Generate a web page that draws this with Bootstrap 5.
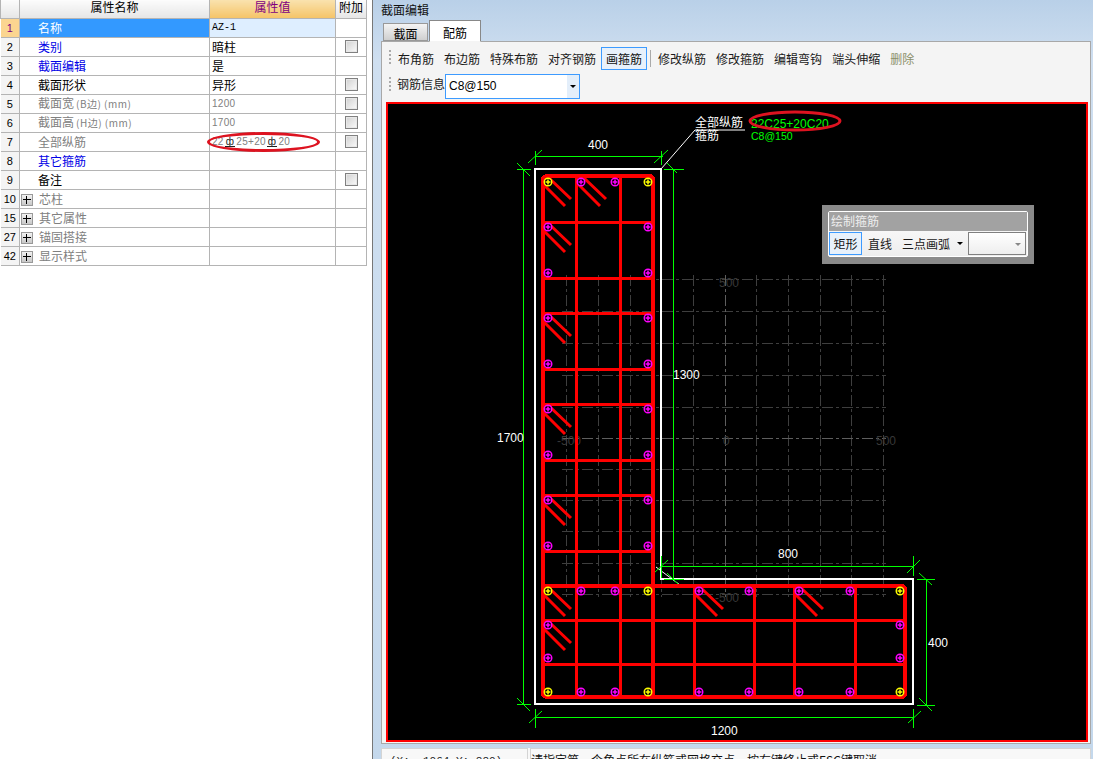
<!DOCTYPE html>
<html lang="zh-CN">
<head>
  <meta charset="UTF-8">
  <title>截面编辑</title>
  <link href="https://cdn.jsdelivr.net/npm/bootstrap@5.3.0/dist/css/bootstrap.min.css" rel="stylesheet">
  <style>
    html, body { height: 759px; overflow: hidden; }
    body { font: 12px/14px "Noto Sans CJK SC", sans-serif; color: #000; background: #fff; }
    .left-pane { width: 373px; flex: none; border-right: 1px solid #777; }
    .right-pane { width: 720px; flex: none; padding: 0 2px 0 8px; background: linear-gradient(#b9d0e8, #cfdff0 60px, #c4d8ec); }

    .prop-table { width: 366px; table-layout: fixed; border-collapse: collapse; margin: 0; border-color: #b4b4b4; }
    .prop-table > :not(caption) > * > * { height: 19px; padding: 0 0 0 2px; font-weight: 400; line-height: 14px; vertical-align: middle; border: 1px solid #b4b4b4; box-shadow: none; background: #fff; color: #000; }
    .prop-table > thead > tr > th { height: 18px; padding: 0; text-align: center; vertical-align: top; border-top: 0; background: linear-gradient(#fcfcfc, #e6e6e6); }
    .prop-table > thead > tr > th.val-head { background: linear-gradient(#f9e2ae, #f5c468); color: #800080; }
    .prop-table > tbody > tr > td.num { padding: 0; text-align: center; font: 11px/14px "Liberation Sans", sans-serif; background: #f4f4f4; border-left: 0; }
    .prop-table > tbody > tr > td.num-on { background: #fbd590; color: #800080; }
    .prop-table > tbody > tr > td.name { padding-left: 18px; }
    .prop-table > tbody > tr > td.tree { padding-left: 1px; }
    .prop-table > tbody > tr > td.sel { background: #3399ff; color: #fff; }
    .prop-table > tbody > tr > td.sel-val { background: #deeeff; font: 10px/14px "Liberation Mono", monospace; }
    .prop-table > tbody > tr > td.blue { color: #0000e6; }
    .prop-table > tbody > tr > td.dim { color: #808080; }
    .prop-table > tbody > tr > td.small-num { font: 10px/14px "Liberation Sans", sans-serif; letter-spacing: .3px; }
    .prop-table > tbody > tr > td.chk { padding: 0; text-align: center; }
    .unit { font-size: 10px; letter-spacing: .5px; margin-left: 2px; }
    .check-box { display: block; width: 13px; height: 13px; margin: 0 auto; border: 1px solid #808080; background: linear-gradient(135deg, #d0d0d0, #fbfbfb); box-shadow: inset 0 0 0 1px #e8e8e8; }
    .plus-box { display: inline-block; width: 12px; height: 12px; margin-right: 6px; vertical-align: -2px; border: 1px solid #999; background: linear-gradient(#f2f2f2, #c8c8c8); position: relative; }
    .plus-box::before { content: ""; position: absolute; left: 1px; right: 1px; top: 4px; height: 1px; background: #000; }
    .plus-box::after { content: ""; position: absolute; top: 1px; bottom: 1px; left: 4px; width: 1px; background: #000; }
    .bar-sym { color: #222; border-bottom: 1px solid #222; line-height: 8px; display: inline-block; font-size: 10px; margin: 0 1px; padding: 0 1px; }
    .mark-ring { position: absolute; left: 207px; top: 132px; width: 113px; height: 20px; border: 3px solid #dd1320; border-radius: 50%; pointer-events: none; }

    .win-title { height: 20px; padding-top: 3px; color: #111; }
    .sect-tabs { height: 21px; padding-left: 2px; border: 0; flex-wrap: nowrap; position: relative; z-index: 1; }
    .sect-tabs .nav-link { height: 18px; margin: 3px 1px 0 0; padding: 3px 0 0; width: 45px; text-align: center; font-size: 12px; line-height: 14px; color: #000; border: 1px solid #999; border-radius: 0; background: linear-gradient(#f4f4f4, #cfcfcf); }
    .sect-tabs .nav-link.active { height: 22px; width: 52px; margin-top: 0; padding-top: 5px; color: #000; border-color: #888; border-bottom-color: #f4f4f4; background: #fff; }
    .tab-frame { height: 703px; padding: 2px 2px 0 4px; border: 1px solid #a8a8a8; background: #f4f4f4; }
    .tool-row { height: 27px; padding: 3px 0 0 3px; background: #f4f4f4; flex-wrap: nowrap; }
    .tool-row-info { height: 31px; padding-top: 3px; }
    .grip { width: 2px; height: 15px; margin: 3px 2px 0 0; flex: none; background: repeating-linear-gradient(#aaa 0 2px, transparent 2px 4px); }
    .tool-btn { height: 23px; padding: 3px 4px; font-size: 12px; line-height: 15px; color: #1a1a1a; border: 1px solid transparent; border-radius: 0; white-space: nowrap; flex: none; }
    .tool-btn.active { border-color: #3d9bff; background: #e8f1fb; color: #111; }
    .tool-btn.off { color: #8b8f6a; }
    .tool-sep { width: 1px; height: 17px; margin: 3px 2px 0 3px; background: #aaa; flex: none; }
    .tool-label { padding-top: 3px; margin-left: 4px; width: 48px; flex: none; color: #222; }
    .bar-select { width: 135px; height: 25px; padding: 4px 0 0 3px; font: 12px/15px "Liberation Sans", sans-serif; background: #fff; border: 1px solid #3d9bff; position: relative; }
    .drop-btn { position: absolute; right: 0; top: 0; bottom: 0; width: 12px; background: #e3eefa; }
    .drop-btn::after, .cad-more::after, .cad-combo::after { content: ""; position: absolute; border: 3px solid transparent; border-top: 3px solid #000; border-bottom: 0; }
    .drop-btn::after { left: 3px; top: 10px; }

    .cad-view { width: 702px; height: 640px; border: 2px solid #f00; background: #000; position: relative; }
    .cad-view svg { display: block; }
    .cad-view text { font: 12px "Liberation Sans", sans-serif; fill: #fff; }
    .cad-view text.cn { font-family: "Noto Sans CJK SC", sans-serif; }
    .cad-view text.gr { fill: #0f0; }
    .cad-view text.gr-sm { fill: #0f0; font-size: 10.5px; }
    .cad-view text.ax { fill: #383838; }
    .cad-float { position: absolute; left: 434px; top: 101px; width: 212px; height: 59px; padding: 6px; background: #8a8a8a; }
    .float-inner { border: 1px solid #fff; border-radius: 2px; height: 46px; background: linear-gradient(#fff, #ededed); }
    .float-title { height: 19px; padding: 2px 2px; color: #eee; background: #a2a2a2; }
    .float-tools { padding: 1px 0 0 0; }
    .float-tools .tool-btn { height: 23px; padding: 3px 5px; }
    .float-tools .tool-btn.active { width: 33px; padding: 3px 0; text-align: center; }
    .float-tools .tool-btn.arc { padding-left: 3px; }
    .cad-more { width: 10px; flex: none; position: relative; margin-right: 2px; }
    .cad-more::after { left: 1px; top: 10px; }
    .cad-combo { width: 58px; height: 23px; flex: none; border: 1px solid #808080; background: linear-gradient(#fff, #eee); position: relative; }
    .cad-combo::after { right: 4px; top: 10px; border-top-color: #888; }

    .status-row { margin-top: 4px; height: 24px; gap: 2px; background: #f8f8f8; }
    .status-pos { width: 147px; padding: 5px 0 0 8px; border: 1px solid #d4d4d4; font: 11px/14px "Liberation Mono", monospace; color: #222; }
    .status-msg { flex: 1; padding-top: 4px; border: 1px solid #d4d4d4; color: #111; white-space: nowrap; }
  </style>
</head>
<body>
<div class="d-flex">
  <div class="left-pane position-relative">
    <table class="table prop-table">
      <colgroup><col style="width:19px"><col style="width:190px"><col style="width:126px"><col style="width:31px"></colgroup>
      <thead>
        <tr><th></th><th>属性名称</th><th class="val-head">属性值</th><th>附加</th></tr>
      </thead>
      <tbody>
        <tr><td class="num num-on">1</td><td class="name sel">名称</td><td class="sel-val">AZ-1</td><td></td></tr>
        <tr><td class="num">2</td><td class="name blue">类别</td><td>暗柱</td><td class="chk"><span class="check-box"></span></td></tr>
        <tr><td class="num">3</td><td class="name blue">截面编辑</td><td>是</td><td></td></tr>
        <tr><td class="num">4</td><td class="name">截面形状</td><td>异形</td><td class="chk"><span class="check-box"></span></td></tr>
        <tr><td class="num">5</td><td class="name dim">截面宽<span class="unit">(B边) (mm)</span></td><td class="dim small-num">1200</td><td class="chk"><span class="check-box"></span></td></tr>
        <tr><td class="num">6</td><td class="name dim">截面高<span class="unit">(H边) (mm)</span></td><td class="dim small-num">1700</td><td class="chk"><span class="check-box"></span></td></tr>
        <tr><td class="num">7</td><td class="name dim">全部纵筋</td><td class="dim small-num">22<span class="bar-sym">ф</span>25+20<span class="bar-sym">ф</span>20</td><td class="chk"><span class="check-box"></span></td></tr>
        <tr><td class="num">8</td><td class="name blue">其它箍筋</td><td></td><td></td></tr>
        <tr><td class="num">9</td><td class="name">备注</td><td></td><td class="chk"><span class="check-box"></span></td></tr>
        <tr><td class="num">10</td><td class="tree dim"><span class="plus-box"></span>芯柱</td><td></td><td></td></tr>
        <tr><td class="num">15</td><td class="tree dim"><span class="plus-box"></span>其它属性</td><td></td><td></td></tr>
        <tr><td class="num">27</td><td class="tree dim"><span class="plus-box"></span>锚固搭接</td><td></td><td></td></tr>
        <tr><td class="num">42</td><td class="tree dim"><span class="plus-box"></span>显示样式</td><td></td><td></td></tr>
      </tbody>
    </table>
    <div class="mark-ring"></div>
  </div>

  <div class="right-pane">
    <div class="win-title">截面编辑</div>
    <ul class="nav nav-tabs sect-tabs">
      <li class="nav-item"><a class="nav-link" href="#">截面</a></li>
      <li class="nav-item"><a class="nav-link active" href="#">配筋</a></li>
    </ul>
    <div class="tab-frame">
      <div class="d-flex tool-row">
        <span class="grip"></span>
        <button class="btn tool-btn">布角筋</button>
        <button class="btn tool-btn">布边筋</button>
        <button class="btn tool-btn">特殊布筋</button>
        <button class="btn tool-btn">对齐钢筋</button>
        <button class="btn tool-btn active">画箍筋</button>
        <span class="tool-sep"></span>
        <button class="btn tool-btn">修改纵筋</button>
        <button class="btn tool-btn">修改箍筋</button>
        <button class="btn tool-btn">编辑弯钩</button>
        <button class="btn tool-btn">端头伸缩</button>
        <button class="btn tool-btn off">删除</button>
      </div>
      <div class="d-flex tool-row tool-row-info">
        <span class="grip"></span>
        <span class="tool-label">钢筋信息</span>
        <div class="bar-select">C8@150<span class="drop-btn"></span></div>
      </div>

      <div class="cad-view">
        <svg width="698" height="636" viewBox="388 104 698 636" shape-rendering="crispEdges" xmlns="http://www.w3.org/2000/svg">
          <defs>
            <g id="rebar"><circle r="3.8" fill="#000" stroke-width="1.4"/><path d="M-2.5 0H2.5M0-2.5V2.5" stroke-width="1.5"/></g>
            <path id="hooks" d="M6 2L28 23M1 9L22 30" fill="none" stroke="#f00" stroke-width="3"/>
          </defs>

          <!-- axis grid -->
          <path fill="none" stroke="#3e3e3e" stroke-dasharray="11 3 3 3" d="M566 275V597M598 275V597M630 275V597M661 275V597M693 275V597M756 275V597M788 275V597M820 275V597M851 275V597M883 275V597M562 279H886M562 311H886M562 343H886M562 375H886M562 407H886M562 469H886M562 500H886M562 531H886M562 563H886M562 594H886"/>
          <path fill="none" stroke="#5e5e5e" stroke-dasharray="11 3 3 3" d="M725 275V597M562 438H886"/>
          <text class="ax" x="719" y="287">500</text>
          <text class="ax" x="557" y="445">-500</text>
          <text class="ax" x="723" y="445">0</text>
          <text class="ax" x="876" y="445">500</text>
          <text class="ax" x="715" y="602">-500</text>

          <!-- section outline and leader -->
          <path d="M535 169H661V579H913V704H535Z" fill="none" stroke="#fff" stroke-width="2"/>
          <path d="M661 169L695 130H745" fill="none" stroke="#fff" shape-rendering="auto"/>
          <path d="M656 567L680 585" fill="none" stroke="#fff" shape-rendering="auto"/>

          <!-- dimensions -->
          <path fill="none" stroke="#0f0" transform="translate(.5 .5)" d="M535 156H662M535 150V164M661 150V164M523 169V704M516 169H530M516 704H530M673 169V579M663 169H683M663 579H683M661 566H913M661 555V577M913 555V575M926 579V705M916 579H934M916 705H934M535 717H913M535 708V727M913 708V727"/>
          <path fill="none" stroke="#0f0" shape-rendering="auto" d="M528 163L542 150M654 163L668 150M517 163L530 176M517 698L530 711M667 163L677 173M667 573L680 586M654 573L668 560M907 573L920 560M919 573L932 585M919 698L932 711M529 723L542 711M908 723L921 711"/>
          <text x="588" y="149">400</text>
          <text x="673" y="379">1300</text>
          <text x="497" y="442">1700</text>
          <text x="778" y="558">800</text>
          <text x="928" y="647">400</text>
          <text x="711" y="735">1200</text>

          <text class="cn" x="695" y="127">全部纵筋</text>
          <text class="cn" x="695" y="140">箍筋</text>
          <text class="gr" x="751" y="128">22C25+20C20</text>
          <text class="gr-sm" x="751" y="140">C8@150</text>
          <ellipse cx="795" cy="121" rx="45" ry="9" fill="none" stroke="#dd1320" stroke-width="3" shape-rendering="auto"/>

          <!-- stirrups -->
          <path fill="none" stroke="#f00" stroke-width="3" d="M543 222H653M543 278H653M543 313H653M543 369H653M543 404H653M543 460H653M543 495H653M543 551H653M543 620H905M543 664H905M576 176V697M620 176V697M694 586V697M754 586V697M794 586V697M855 586V697"/>
          <path fill="none" stroke="#f00" stroke-width="4" stroke-linejoin="round" d="M548 176H649Q653 176 653 180V586H901Q905 586 905 590V693Q905 697 901 697H548Q543 697 543 693V180Q543 176 548 176ZM653 586V697M543 586H653"/>
          <g shape-rendering="auto">
            <use href="#hooks" x="543" y="176"/><use href="#hooks" x="578" y="176"/>
            <use href="#hooks" x="543" y="222"/><use href="#hooks" x="543" y="313"/>
            <use href="#hooks" x="543" y="404"/><use href="#hooks" x="543" y="495"/>
            <use href="#hooks" x="543" y="586"/><use href="#hooks" x="543" y="620"/>
            <use href="#hooks" x="695" y="586"/><use href="#hooks" x="795" y="586"/>
          </g>

          <!-- longitudinal bars -->
          <g stroke="#f0f" shape-rendering="auto">
            <use href="#rebar" x="581" y="182"/><use href="#rebar" x="615" y="182"/>
            <use href="#rebar" x="548" y="227"/><use href="#rebar" x="648" y="227"/>
            <use href="#rebar" x="548" y="273"/><use href="#rebar" x="648" y="273"/>
            <use href="#rebar" x="548" y="318"/><use href="#rebar" x="648" y="318"/>
            <use href="#rebar" x="548" y="364"/><use href="#rebar" x="648" y="364"/>
            <use href="#rebar" x="548" y="409"/><use href="#rebar" x="648" y="409"/>
            <use href="#rebar" x="548" y="455"/><use href="#rebar" x="648" y="455"/>
            <use href="#rebar" x="548" y="500"/><use href="#rebar" x="648" y="500"/>
            <use href="#rebar" x="548" y="546"/><use href="#rebar" x="648" y="546"/>
            <use href="#rebar" x="581" y="591"/><use href="#rebar" x="615" y="591"/>
            <use href="#rebar" x="699" y="591"/><use href="#rebar" x="749" y="591"/>
            <use href="#rebar" x="799" y="591"/><use href="#rebar" x="850" y="591"/>
            <use href="#rebar" x="581" y="692"/><use href="#rebar" x="615" y="692"/>
            <use href="#rebar" x="699" y="692"/><use href="#rebar" x="749" y="692"/>
            <use href="#rebar" x="799" y="692"/><use href="#rebar" x="850" y="692"/>
            <use href="#rebar" x="548" y="625"/><use href="#rebar" x="548" y="658"/>
            <use href="#rebar" x="900" y="625"/><use href="#rebar" x="900" y="658"/>
          </g>
          <g stroke="#ff0" shape-rendering="auto">
            <use href="#rebar" x="548" y="182"/><use href="#rebar" x="648" y="182"/>
            <use href="#rebar" x="548" y="591"/><use href="#rebar" x="648" y="591"/>
            <use href="#rebar" x="900" y="591"/><use href="#rebar" x="548" y="692"/>
            <use href="#rebar" x="648" y="692"/><use href="#rebar" x="900" y="692"/>
          </g>
        </svg>

        <div class="cad-float">
          <div class="float-inner">
            <div class="float-title">绘制箍筋</div>
            <div class="d-flex float-tools">
              <button class="btn tool-btn active">矩形</button>
              <button class="btn tool-btn">直线</button>
              <button class="btn tool-btn arc">三点画弧</button>
              <span class="cad-more"></span>
              <span class="cad-combo"></span>
            </div>
          </div>
        </div>
      </div>
    </div>
    <div class="d-flex status-row">
      <div class="status-pos">(X: -1064 Y: 880)</div>
      <div class="status-msg">请指定第一个角点所在纵筋或网格交点，按右键终止或ESC键取消</div>
    </div>
  </div>
</div>
<script src="https://cdn.jsdelivr.net/npm/bootstrap@5.3.0/dist/js/bootstrap.bundle.min.js"></script>
</body>
</html>
